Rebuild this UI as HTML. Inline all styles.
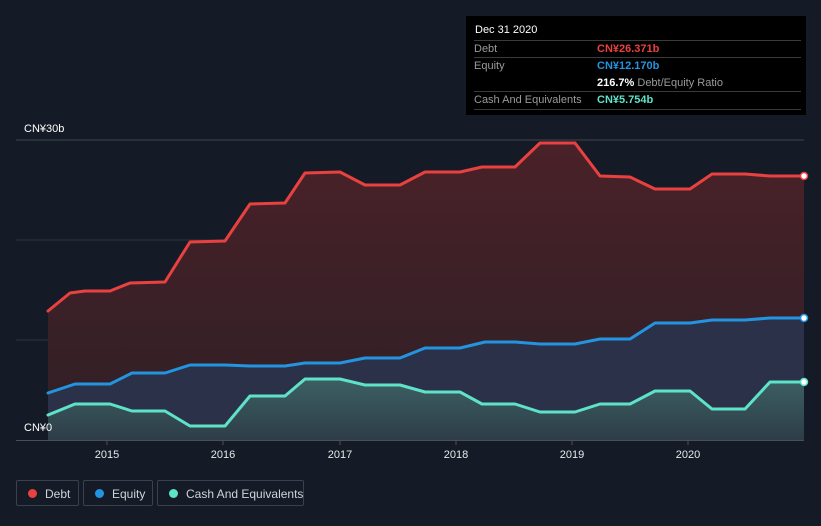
<!DOCTYPE html>
<html><head><meta charset="utf-8"><style>
body{margin:0;width:821px;height:526px;background:#151b26;font-family:"Liberation Sans",sans-serif;overflow:hidden;position:relative}
.t{position:absolute;font-size:11px;color:#fff}
.tip{position:absolute;left:466px;top:16px;width:340px;height:99px;background:#000;}
.row{position:absolute;left:8px;width:327px;border-top:1px solid #3a3a3a;font-size:11px;white-space:nowrap}
.lab{position:absolute;left:0;color:#9a9a9a}
.val{position:absolute;left:123px;font-weight:bold}
.leg{position:absolute;top:480px;height:26px;border:1px solid #3b414c;border-radius:2px;color:#cfd3d9;font-size:12px;line-height:26px;box-sizing:border-box;white-space:nowrap}
.dot{position:absolute;top:8px;width:9px;height:9px;border-radius:50%}
</style></head><body>
<svg width="821" height="526" style="position:absolute;left:0;top:0">
<defs>
<linearGradient id="gd" x1="0" y1="0" x2="0" y2="1"><stop offset="0" stop-color="#4a2128"/><stop offset="1" stop-color="#2e1f26"/></linearGradient>
<linearGradient id="gc" x1="0" y1="0" x2="0" y2="1"><stop offset="0" stop-color="#3c6064"/><stop offset="1" stop-color="#2e3d48"/></linearGradient>
</defs>
<line x1="16" y1="140" x2="804" y2="140" stroke="#3e434c"/>
<line x1="16" y1="240" x2="804" y2="240" stroke="#2e333c"/>
<line x1="16" y1="340" x2="804" y2="340" stroke="#2e333c"/>
<polygon fill="url(#gd)" points="48,440 48,311 70,293 85,291 110,291 130,283 165,282 190,242 225,241 250,204 285,203 305,173 340,172 365,185 400,185 425,172 460,172 482,167 515,167 540,143 575,143 600,176 630,177 655,189 690,189 712,174 745,174 770,176 804,176 804,440"/>
<polygon fill="#2b3148" points="48,440 48,393 75,384 110,384 132,373 165,373 190,365 225,365 250,366 285,366 305,363 340,363 365,358 400,358 425,348 460,348 485,342 515,342 540,344 575,344 600,339 630,339 655,323 690,323 712,320 745,320 770,318 804,318 804,440"/>
<polygon fill="url(#gc)" points="48,440 48,415 75,404 110,404 132,411 165,411 190,426 225,426 250,396 285,396 305,379 340,379 365,385 400,385 425,392 460,392 482,404 515,404 540,412 575,412 600,404 630,404 655,391 690,391 712,409 745,409 770,382 804,382 804,440"/>
<g fill="none" stroke-width="3" stroke-linejoin="round" stroke-linecap="round">
<polyline stroke="#e8413f" points="48,311 70,293 85,291 110,291 130,283 165,282 190,242 225,241 250,204 285,203 305,173 340,172 365,185 400,185 425,172 460,172 482,167 515,167 540,143 575,143 600,176 630,177 655,189 690,189 712,174 745,174 770,176 804,176"/>
<polyline stroke="#2394e0" points="48,393 75,384 110,384 132,373 165,373 190,365 225,365 250,366 285,366 305,363 340,363 365,358 400,358 425,348 460,348 485,342 515,342 540,344 575,344 600,339 630,339 655,323 690,323 712,320 745,320 770,318 804,318"/>
<polyline stroke="#5ee3c8" points="48,415 75,404 110,404 132,411 165,411 190,426 225,426 250,396 285,396 305,379 340,379 365,385 400,385 425,392 460,392 482,404 515,404 540,412 575,412 600,404 630,404 655,391 690,391 712,409 745,409 770,382 804,382"/>
</g>
<circle cx="804" cy="176" r="3.5" fill="#fff" stroke="#e8413f" stroke-width="1.5"/>
<circle cx="804" cy="318" r="3.5" fill="#fff" stroke="#2394e0" stroke-width="1.5"/>
<circle cx="804" cy="382" r="3.5" fill="#fff" stroke="#5ee3c8" stroke-width="1.5"/>
<rect x="16" y="420" width="32" height="20" fill="#151b26"/>
<line x1="16" y1="440.5" x2="804" y2="440.5" stroke="#4a4f58"/>
<g stroke="#4a4f58"><line x1="107" y1="441" x2="107" y2="445"/><line x1="223" y1="441" x2="223" y2="445"/><line x1="340" y1="441" x2="340" y2="445"/><line x1="456" y1="441" x2="456" y2="445"/><line x1="572" y1="441" x2="572" y2="445"/><line x1="688" y1="441" x2="688" y2="445"/></g>
<g fill="#e6e8ea" font-size="11" text-anchor="middle" font-family="Liberation Sans"><text x="107" y="458">2015</text><text x="223" y="458">2016</text><text x="340" y="458">2017</text><text x="456" y="458">2018</text><text x="572" y="458">2019</text><text x="688" y="458">2020</text></g>
</svg>
<div class="t" style="left:24px;top:123px">CN¥30b</div>
<div class="t" style="left:24px;top:422px">CN¥0</div>
<div class="tip">
<div style="position:absolute;left:9px;top:8px;color:#fff;font-size:11px">Dec 31 2020</div>
<div class="row" style="top:24px;height:17px;line-height:16px"><span class="lab">Debt</span><span class="val" style="color:#e8413f">CN¥26.371b</span></div>
<div class="row" style="top:41px;height:34px;line-height:16px"><span class="lab">Equity</span><span class="val" style="color:#2394e0">CN¥12.170b</span><span class="val" style="top:17px;color:#fff">216.7% <span style="color:#9a9a9a;font-weight:normal">Debt/Equity Ratio</span></span></div>
<div class="row" style="top:75px;height:17px;line-height:16px;border-bottom:1px solid #3a3a3a"><span class="lab">Cash And Equivalents</span><span class="val" style="color:#5ee3c8">CN¥5.754b</span></div>
</div>
<div class="leg" style="left:16px;width:63px"><span class="dot" style="left:11px;background:#e8413f"></span><span style="position:absolute;left:28px">Debt</span></div>
<div class="leg" style="left:83px;width:70px"><span class="dot" style="left:11px;background:#2394e0"></span><span style="position:absolute;left:28px">Equity</span></div>
<div class="leg" style="left:157px;width:147px"><span class="dot" style="left:11px;background:#5ee3c8"></span><span style="position:absolute;left:28px">Cash And Equivalents</span></div>
</body></html>
